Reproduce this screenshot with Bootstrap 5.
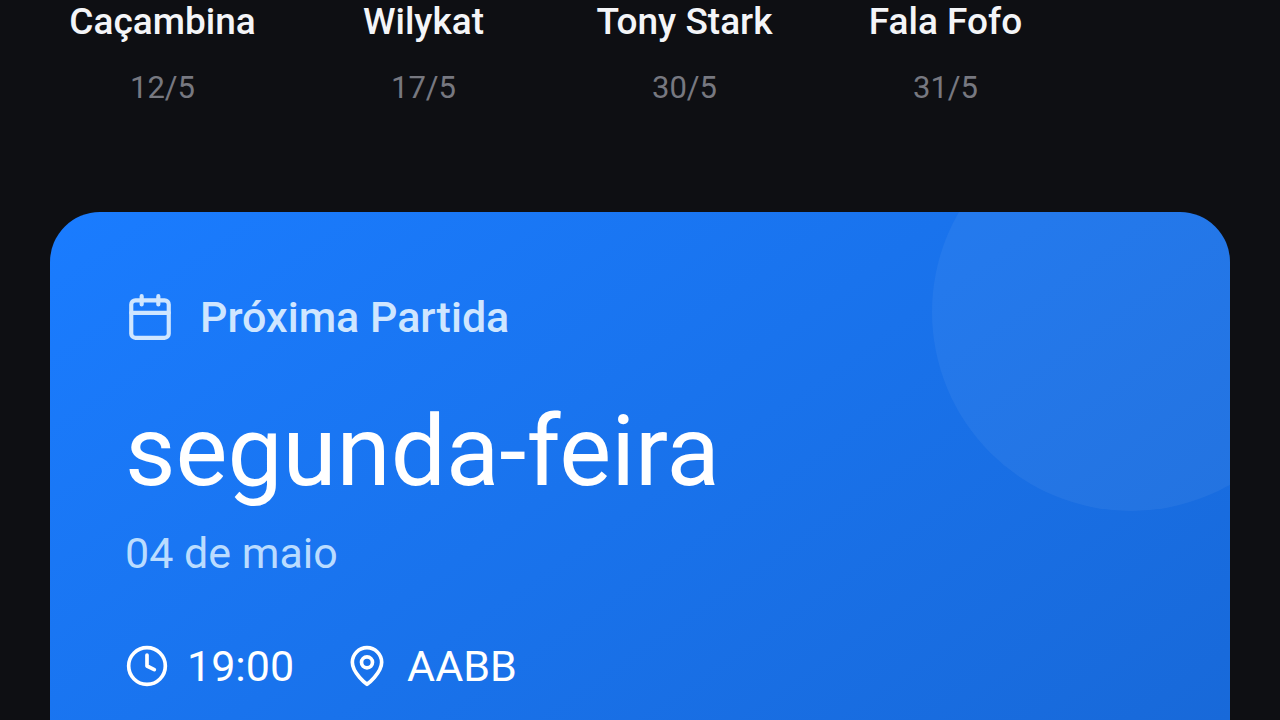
<!DOCTYPE html>
<html lang="pt-BR">
<head>
<meta charset="utf-8">
<meta name="viewport" content="width=device-width, initial-scale=1">
<title>Próxima Partida</title>
<link href="https://cdn.jsdelivr.net/npm/bootstrap@5.3.0/dist/css/bootstrap.min.css" rel="stylesheet">
<style>
body{background:#0e0f13;color:#f4f5f8;font-family:Roboto,sans-serif;overflow-x:hidden}
.page{padding:0 50px}
.people{margin-left:-18px}
.person{width:261px}
.person-name{font-size:37px;line-height:44px;font-weight:500}
.person-date{font-size:31px;line-height:40px;color:#777880;margin-top:24px}
.match{margin-top:104px;border-radius:50px 50px 0 0;padding:75px 75px 20px;background:linear-gradient(145deg,#1a7cff,#1869d9);color:#fff}
.orb{width:398px;height:398px;right:-100px;top:-99px;background:rgba(255,255,255,.05)}
.match-label{font-size:43px;line-height:60px;font-weight:500;color:#cfe6ff;gap:25px}
.match-day{font-size:98px;line-height:120px;font-weight:400;margin:45px 0 11px}
.match-date{font-size:43px;line-height:60px;color:#badcff}
.match-info{font-size:43px;line-height:60px;margin-top:53px;gap:51px}
.match-fact{gap:18px}
.line-icon{fill:none;stroke:currentColor;stroke-width:2;stroke-linecap:round;stroke-linejoin:round;flex:none}
</style>
</head>
<body>
<main class="page min-vh-100 d-flex flex-column">
<section class="people d-flex text-center">
<div class="person flex-shrink-0"><div class="person-name">Caçambina</div><div class="person-date">12/5</div></div>
<div class="person flex-shrink-0"><div class="person-name">Wilykat</div><div class="person-date">17/5</div></div>
<div class="person flex-shrink-0"><div class="person-name">Tony Stark</div><div class="person-date">30/5</div></div>
<div class="person flex-shrink-0"><div class="person-name">Fala Fofo</div><div class="person-date">31/5</div></div>
</section>
<section class="match position-relative overflow-hidden flex-grow-1">
<div class="orb position-absolute rounded-circle"></div>
<div class="match-label d-flex align-items-center">
<svg class="line-icon" width="50" height="50" viewBox="0 0 24 24" aria-hidden="true"><rect x="3" y="4" width="18" height="18" rx="2"/><path d="M8 2v4M16 2v4M3 10h18"/></svg>
<span>Próxima Partida</span>
</div>
<h1 class="match-day">segunda-feira</h1>
<div class="match-date">04 de maio</div>
<div class="match-info d-flex">
<div class="match-fact d-flex align-items-center">
<svg class="line-icon" width="44" height="44" viewBox="0 0 24 24" aria-hidden="true"><circle cx="12" cy="12" r="10"/><path d="M12 6v6l4 2"/></svg>
<span>19:00</span>
</div>
<div class="match-fact d-flex align-items-center">
<svg class="line-icon" width="44" height="44" viewBox="0 0 24 24" aria-hidden="true"><path d="M20 10c0 6-8 12-8 12s-8-6-8-12a8 8 0 0 1 16 0Z"/><circle cx="12" cy="10" r="3"/></svg>
<span>AABB</span>
</div>
</div>
</section>
</main>
<script src="https://cdn.jsdelivr.net/npm/bootstrap@5.3.0/dist/js/bootstrap.bundle.min.js"></script>
</body>
</html>
